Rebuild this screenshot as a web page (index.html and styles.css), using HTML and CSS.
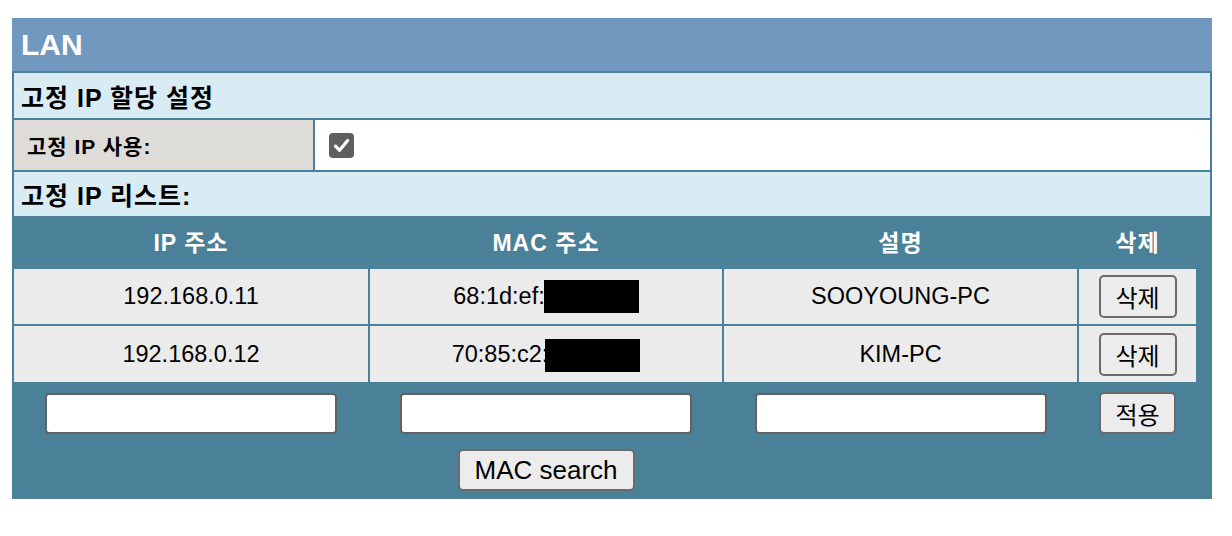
FILE: index.html
```html
<!DOCTYPE html>
<html lang="ko">
<head>
<meta charset="utf-8">
<title>LAN</title>
<link rel="stylesheet" href="styles.css">
</head>
<body>
<div class="panel">
  <div class="panel-title">LAN</div>
  <div class="panel-body">
    <div class="section-row">고정 IP 할당 설정</div>
    <div class="field-row">
      <div class="field-label">고정 IP 사용:</div>
      <div class="field-value">
        <span class="checkbox">
          <svg viewBox="0 0 25 25" width="25" height="25"><path d="M6.5 13.2 L10.6 17.3 L18.6 7.6" fill="none" stroke="#fff" stroke-width="3.2" stroke-linecap="round" stroke-linejoin="round"/></svg>
        </span>
      </div>
    </div>
    <div class="section-row list-title">고정 IP 리스트:</div>
    <div class="ip-list">
      <div class="th">IP 주소</div>
      <div class="th">MAC 주소</div>
      <div class="th">설명</div>
      <div class="th">삭제</div>

      <div class="td">192.168.0.11</div>
      <div class="td">68:1d:ef:<span class="redact"></span></div>
      <div class="td">SOOYOUNG-PC</div>
      <div class="td"><button class="btn btn-del">삭제</button></div>

      <div class="td">192.168.0.12</div>
      <div class="td">70:85:c2:<span class="redact redact-2"></span></div>
      <div class="td">KIM-PC</div>
      <div class="td"><button class="btn btn-del">삭제</button></div>

      <div class="tf"><input class="text-input" type="text"></div>
      <div class="tf"><input class="text-input" type="text"></div>
      <div class="tf"><input class="text-input" type="text"></div>
      <div class="tf"><button class="btn btn-apply">적용</button></div>

      <div class="tf-mac"><button class="btn btn-mac">MAC search</button></div>
    </div>
  </div>
</div>
</body>
</html>
```

FILE: styles.css
```css
html, body {
  margin: 0;
  padding: 0;
  background: #ffffff;
}

body {
  font-family: "Liberation Sans", Arial, "Noto Sans CJK KR", sans-serif;
  color: #000;
}

.panel {
  width: 1200px;
  margin: 18px 0 0 12px;
}

.panel-title {
  height: 53px;
  background: #7199bf;
  color: #ffffff;
  font-weight: bold;
  font-size: 30px;
  display: flex;
  align-items: center;
  padding-left: 9px;
  box-sizing: border-box;
}

.panel-body {
  background: #4a8199;
  padding: 2px 2px 8px 2px;
  display: flex;
  flex-direction: column;
  gap: 2px;
}

.section-row {
  height: 45px;
  background: #d9ebf3;
  font-weight: bold;
  font-size: 25px;
  letter-spacing: 1px;
  display: flex;
  align-items: center;
  padding-left: 7px;
}

.list-title {
  height: 44px;
}

.field-row {
  display: grid;
  grid-template-columns: 299px 1fr;
  gap: 2px;
  height: 50px;
}

.field-label {
  background: #dddcd8;
  font-weight: bold;
  font-size: 21px;
  letter-spacing: 1px;
  display: flex;
  align-items: center;
  padding-left: 13px;
}

.field-value {
  background: #ffffff;
  display: flex;
  align-items: center;
  padding-left: 14px;
}

.checkbox {
  width: 25px;
  height: 25px;
  border-radius: 4px;
  background: #5f5f5f;
  display: block;
  margin-top: 1px;
}

.checkbox svg {
  display: block;
}

.ip-list {
  display: grid;
  grid-template-columns: 354px 352px 353px 117px;
  grid-template-rows: 49px 55px 56px 50px auto;
  column-gap: 2px;
  row-gap: 2px;
  padding-right: 14px;
}

.th {
  color: #ffffff;
  font-weight: bold;
  font-size: 23px;
  letter-spacing: 1px;
  display: flex;
  align-items: center;
  justify-content: center;
  padding-bottom: 3px;
}

.td {
  background: #ebebeb;
  font-size: 23.5px;
  display: flex;
  align-items: center;
  justify-content: center;
}

.redact {
  display: inline-block;
  width: 95px;
  height: 33px;
  background: #000;
  margin-left: -1px;
}

.redact-2 {
  margin-left: -3px;
  margin-top: 2px;
}

.tf {
  display: flex;
  justify-content: center;
  align-items: flex-start;
  padding-top: 9px;
}

.tf-mac {
  grid-column: 2;
  display: flex;
  justify-content: center;
  padding-top: 13px;
}

.text-input {
  width: 292px;
  height: 41px;
  box-sizing: border-box;
  border: 2px solid #626262;
  border-radius: 4px;
  background: #ffffff;
  margin: 0;
  padding: 0 6px;
  font-size: 20px;
}

.btn {
  box-sizing: border-box;
  border: 2px solid #6a6a6a;
  border-radius: 5px;
  background: #ececec;
  color: #000;
  margin: 0;
  padding: 0;
  font-family: "Liberation Sans", Arial, "Noto Sans CJK KR", sans-serif;
}

.btn-del {
  width: 78px;
  height: 43px;
  font-size: 24px;
}

.btn-apply {
  width: 77px;
  height: 42px;
  font-size: 24px;
  margin-top: -1px;
}

.btn-mac {
  width: 177px;
  height: 42px;
  font-size: 26px;
}
```
